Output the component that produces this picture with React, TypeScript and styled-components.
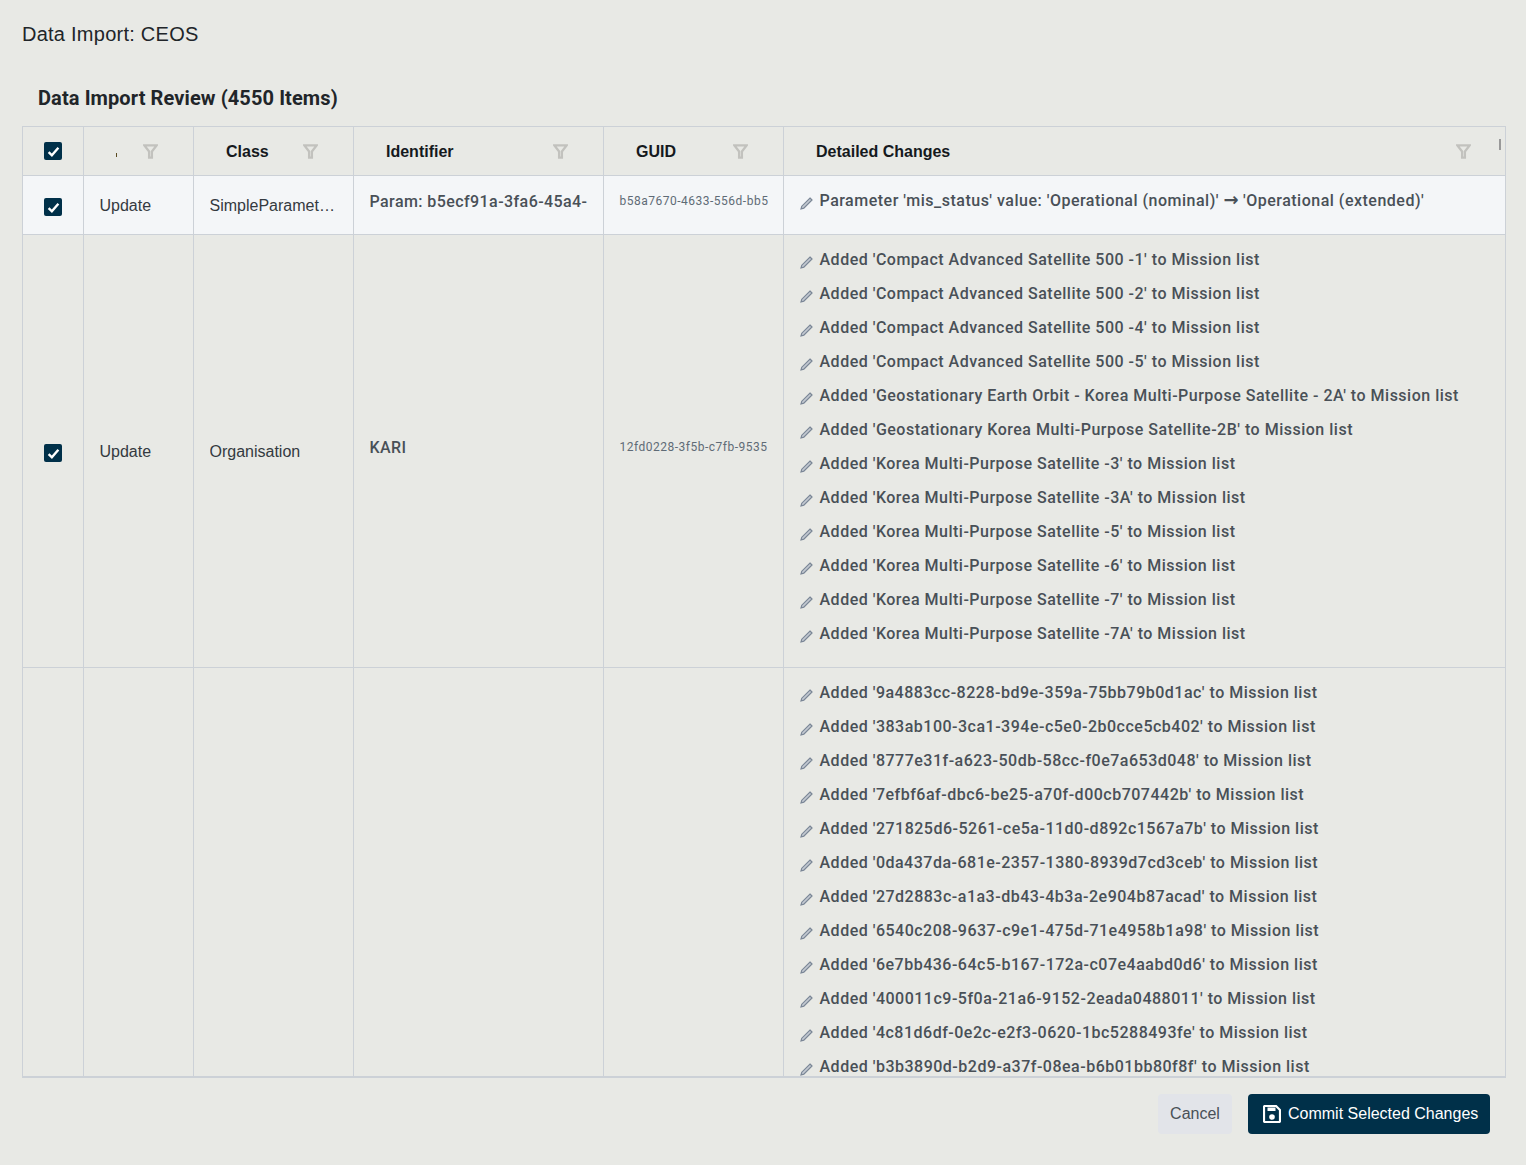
import React from 'react';
import styled, { createGlobalStyle } from 'styled-components';

const GlobalStyle = createGlobalStyle`
    html, body {
        margin: 0;
        padding: 0;
        height: 100%;
        background: #e8e9e5;
    }
    body {
        font-family: "Liberation Sans", Arial, sans-serif;
        overflow: hidden;
    }
`
const Page = styled.div`
    width: 1526px;
    height: 1165px;
    display: flex;
    flex-direction: column;
    box-sizing: border-box;
    padding: 22px 20px 0 22px;
    background: #e8e9e5;
`
const Title = styled.h1`
    margin: 0;
    height: 24px;
    font-size: 20px;
    line-height: 24px;
    font-weight: 400;
    letter-spacing: 0.25px;
    color: #212529;
`
const ReviewTitle = styled.h2`
    margin: 40px 0 0 16px;
    height: 40px;
    font-family: Roboto, sans-serif;
    font-size: 20px;
    line-height: 24px;
    font-weight: 700;
    letter-spacing: 0.1px;
    color: #212529;
`
const Table = styled.div`
    position: relative;
    height: 952px;
    box-sizing: border-box;
    overflow: hidden;
    border: 1px solid #ccd1d7;
    border-bottom-width: 2px;
`
const Row = styled.div<{ $head?: boolean; $light?: boolean }>`
    display: flex;
    flex: none;
    height: ${p => (p.$head ? '48px' : 'auto')};
    background: ${p => (p.$light ? '#f4f6f8' : 'transparent')};
    border-bottom: 1px solid #ccd1d7;
`
const Cell = styled.div<{ $w: number; $last?: boolean }>`
    display: flex;
    align-items: center;
    flex: none;
    width: ${p => p.$w}px;
    box-sizing: border-box;
    min-width: 0;
    padding: 0 15.5px;
    border-right: ${p => (p.$last ? '0' : '1px solid #ccd1d7')};
`
const CheckCell = styled(Cell)<{ $offset?: number }>`
    justify-content: center;
    padding: ${p => p.$offset || 0}px 0 0 0;
`
const ChangeCell = styled(Cell)`
    padding: 0;
`
const HeadCell = styled(Cell)`
    justify-content: space-between;
    padding: 0 35px 0 32px;
`
const HeadLabel = styled.span`
    padding-top: 2px;
    font-size: 16px;
    font-weight: 700;
    color: #15191d;
`
const TinyMark = styled.span`
    display: block;
    width: 1px;
    height: 4px;
    margin-top: 8px;
    background: #5a4a20;
`
const PlainText = styled.span`
    padding-top: 2px;
    font-size: 16px;
    color: #343a40;
    white-space: nowrap;
    overflow: hidden;
    text-overflow: ellipsis;
`
const IdText = styled.span`
    padding-bottom: 8px;
    font-family: Roboto, sans-serif;
    font-size: 16px;
    font-weight: 500;
    letter-spacing: 0.42px;
    color: #495057;
    white-space: nowrap;
`
const GuidText = styled.span`
    padding-bottom: 8px;
    font-family: Roboto, sans-serif;
    font-size: 12px;
    letter-spacing: 0.5px;
    color: #5f6b76;
    white-space: nowrap;
`
const ChangeList = styled.ul`
    list-style: none;
    margin: 0;
    padding: 7px 0 17px 16px;
`
const ChangeItem = styled.li`
    display: flex;
    height: 34px;
    align-items: center;
    font-family: Roboto, sans-serif;
    font-size: 16px;
    font-weight: 500;
    letter-spacing: 0.5px;
    color: #495057;
    white-space: nowrap;
`
const Arrow = styled.span`
    font-family: "DejaVu Sans", sans-serif;
    font-size: 18px;
    line-height: 16px;
    font-weight: 700;
    letter-spacing: 0;
`
const PencilIcon = styled.svg`
    flex: none;
    width: 13px;
    height: 13px;
    margin: 6px 6.5px 0 0;
    fill: #c3c9d1;
    stroke: #7a8696;
    stroke-width: 1.2;
`
const FilterIcon = styled.svg`
    flex: none;
    width: 15px;
    height: 15px;
    fill: none;
    stroke: #c2c2be;
    stroke-width: 2.4;
`
const Grip = styled.span`
    position: absolute;
    top: 12px;
    right: 4px;
    width: 2px;
    height: 11px;
    background: #999;
`
const Box = styled.span`
    display: flex;
    align-items: center;
    justify-content: center;
    width: 18px;
    height: 18px;
    border-radius: 2px;
    background: #003049;
    svg {
        width: 13px;
        height: 13px;
        fill: none;
        stroke: #fff;
        stroke-width: 2.2;
    }
`
const Footer = styled.div`
    display: flex;
    justify-content: flex-end;
    gap: 16px;
    padding: 16px 16px 0 0;
`
const CancelButton = styled.button`
    width: 74px;
    height: 40px;
    padding: 0;
    border: 0;
    border-radius: 4px;
    background: #e2e4e9;
    font-family: inherit;
    font-size: 16px;
    color: #495057;
`
const CommitButton = styled.button`
    display: flex;
    align-items: center;
    gap: 7px;
    width: 242px;
    height: 40px;
    box-sizing: border-box;
    padding: 0 0 0 15px;
    border: 0;
    border-radius: 4px;
    background: #003049;
    font-family: inherit;
    font-size: 16px;
    color: #fff;
    svg {
        width: 18px;
        height: 18px;
    }
`

const widths = [61, 110, 160, 250, 180, 722];

const koreaList = [
    'Compact Advanced Satellite 500 -1',
    'Compact Advanced Satellite 500 -2',
    'Compact Advanced Satellite 500 -4',
    'Compact Advanced Satellite 500 -5',
    'Geostationary Earth Orbit - Korea Multi-Purpose Satellite - 2A',
    'Geostationary Korea Multi-Purpose Satellite-2B',
    'Korea Multi-Purpose Satellite -3',
    'Korea Multi-Purpose Satellite -3A',
    'Korea Multi-Purpose Satellite -5',
    'Korea Multi-Purpose Satellite -6',
    'Korea Multi-Purpose Satellite -7',
    'Korea Multi-Purpose Satellite -7A',
];

const guidList = [
    '9a4883cc-8228-bd9e-359a-75bb79b0d1ac',
    '383ab100-3ca1-394e-c5e0-2b0cce5cb402',
    '8777e31f-a623-50db-58cc-f0e7a653d048',
    '7efbf6af-dbc6-be25-a70f-d00cb707442b',
    '271825d6-5261-ce5a-11d0-d892c1567a7b',
    '0da437da-681e-2357-1380-8939d7cd3ceb',
    '27d2883c-a1a3-db43-4b3a-2e904b87acad',
    '6540c208-9637-c9e1-475d-71e4958b1a98',
    '6e7bb436-64c5-b167-172a-c07e4aabd0d6',
    '400011c9-5f0a-21a6-9152-2eada0488011',
    '4c81d6df-0e2c-e2f3-0620-1bc5288493fe',
    'b3b3890d-b2d9-a37f-08ea-b6b01bb80f8f',
];

const Filter = () => (
    <FilterIcon viewBox="0 0 16 16">
        <path d="M1.5 1.5h13L9.5 8v6.5h-3V8z" />
    </FilterIcon>
);

const Pencil = () => (
    <PencilIcon viewBox="0 0 13 13">
        <path d="M10 1l2 2-8.2 8.2-2.8.8.8-2.8z" />
    </PencilIcon>
);

const Check = () => (
    <Box>
        <svg viewBox="0 0 12 12">
            <path d="M1.5 6.5l3 3 6-7" />
        </svg>
    </Box>
);

const SaveIcon = () => (
    <svg viewBox="0 0 18 18">
        <path d="M2 1h11l4 4v11a1 1 0 0 1-1 1H2a1 1 0 0 1-1-1V2a1 1 0 0 1 1-1z" fill="none" stroke="#fff" strokeWidth="2.2" />
        <rect x="4.5" y="2.5" width="8" height="3.5" fill="#fff" />
        <circle cx="9" cy="12" r="2.8" fill="#fff" />
    </svg>
);

const Change = ({ text }: { text: React.ReactNode }) => (
    <ChangeItem>
        <Pencil />
        <span>{text}</span>
    </ChangeItem>
);

const App = () => (
    <Page>
        <GlobalStyle />
        <Title>Data Import: CEOS</Title>
        <ReviewTitle>Data Import Review (4550 Items)</ReviewTitle>
        <Table>
            <Row $head>
                <CheckCell $w={widths[0]}><Check /></CheckCell>
                <HeadCell $w={widths[1]}><TinyMark /><Filter /></HeadCell>
                <HeadCell $w={widths[2]}><HeadLabel>Class</HeadLabel><Filter /></HeadCell>
                <HeadCell $w={widths[3]}><HeadLabel>Identifier</HeadLabel><Filter /></HeadCell>
                <HeadCell $w={widths[4]}><HeadLabel>GUID</HeadLabel><Filter /></HeadCell>
                <HeadCell $w={widths[5]} $last><HeadLabel>Detailed Changes</HeadLabel><Filter /></HeadCell>
            </Row>
            <Row $light>
                <CheckCell $w={widths[0]} $offset={4}><Check /></CheckCell>
                <Cell $w={widths[1]}><PlainText>Update</PlainText></Cell>
                <Cell $w={widths[2]}><PlainText>SimpleParameterValue</PlainText></Cell>
                <Cell $w={widths[3]}><IdText>Param: b5ecf91a-3fa6-45a4-</IdText></Cell>
                <Cell $w={widths[4]}><GuidText>b58a7670-4633-556d-bb5</GuidText></Cell>
                <ChangeCell $w={widths[5]} $last>
                    <ChangeList>
                        <Change
                            text={<>Parameter 'mis_status' value: 'Operational (nominal)' <Arrow>→</Arrow> 'Operational (extended)'</>}
                        />
                    </ChangeList>
                </ChangeCell>
            </Row>
            <Row>
                <CheckCell $w={widths[0]} $offset={4}><Check /></CheckCell>
                <Cell $w={widths[1]}><PlainText>Update</PlainText></Cell>
                <Cell $w={widths[2]}><PlainText>Organisation</PlainText></Cell>
                <Cell $w={widths[3]}><IdText>KARI</IdText></Cell>
                <Cell $w={widths[4]}><GuidText>12fd0228-3f5b-c7fb-9535</GuidText></Cell>
                <ChangeCell $w={widths[5]} $last>
                    <ChangeList>
                        {koreaList.map(name => (
                            <Change key={name} text={`Added '${name}' to Mission list`} />
                        ))}
                    </ChangeList>
                </ChangeCell>
            </Row>
            <Row>
                <CheckCell $w={widths[0]} />
                <Cell $w={widths[1]} />
                <Cell $w={widths[2]} />
                <Cell $w={widths[3]} />
                <Cell $w={widths[4]} />
                <ChangeCell $w={widths[5]} $last>
                    <ChangeList>
                        {guidList.map(guid => (
                            <Change key={guid} text={`Added '${guid}' to Mission list`} />
                        ))}
                    </ChangeList>
                </ChangeCell>
            </Row>
            <Grip />
        </Table>
        <Footer>
            <CancelButton>Cancel</CancelButton>
            <CommitButton><SaveIcon />Commit Selected Changes</CommitButton>
        </Footer>
    </Page>
);

export default App;
